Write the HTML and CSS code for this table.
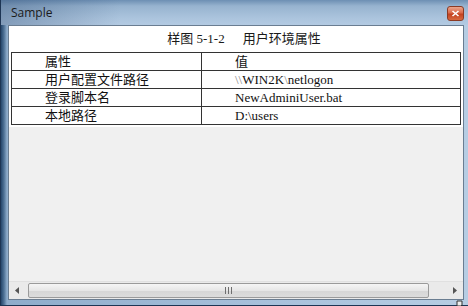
FILE: index.html
```html
<!DOCTYPE html>
<html lang="zh">
<head>
<meta charset="utf-8">
<title>Sample</title>
<link rel="stylesheet" href="styles.css">
</head>
<body>
<div class="window">
  <div class="titlebar">
    <span class="title">Sample</span>
    <span class="close"><svg width="9" height="7" viewBox="0 0 9 7"><path d="M1.5 1 L7.5 6 M7.5 1 L1.5 6" stroke="#fff" stroke-width="1.6"/></svg></span>
  </div>
  <div class="frame">
    <div class="client">
      <div class="sheet">
        <div class="caption">样图 5-1-2<span class="gap"></span>用户环境属性</div>
        <table class="grid">
          <colgroup><col class="c1"><col></colgroup>
          <tr class="head"><td class="k">属性</td><td class="v">值</td></tr>
          <tr><td class="k">用户配置文件路径</td><td class="v"><span class="dim">\\</span>WIN2K<span class="dim">\</span>netlogon</td></tr>
          <tr><td class="k">登录脚本名</td><td class="v">NewAdminiUser.bat</td></tr>
          <tr><td class="k">本地路径</td><td class="v">D:\users</td></tr>
        </table>
      </div>
      <div class="empty"></div>
      <div class="hscroll">
        <span class="arrow"><svg width="5" height="7" viewBox="0 0 5 7"><path d="M4 0 L0 3.5 L4 7 Z" fill="#555"/></svg></span>
        <span class="thumb"><span class="grip"></span></span>
        <span class="arrow"><svg width="5" height="7" viewBox="0 0 5 7"><path d="M1 0 L5 3.5 L1 7 Z" fill="#555"/></svg></span>
      </div>
    </div>
  </div>
  <span class="sizer"><svg width="9" height="9" viewBox="0 0 9 9"><path d="M1 1 h5 v5 h-5 Z M5 5 L8.5 8.5" stroke="#333" fill="#eee" stroke-width="1"/></svg></span>
</div>
</body>
</html>
```

FILE: styles.css
```css
html, body {
  margin: 0;
  padding: 0;
  background: #ffffff;
}
.window {
  position: relative;
  width: 468px;
  height: 306px;
  box-sizing: border-box;
  display: flex;
  flex-direction: column;
  background: linear-gradient(to right, #26476c 0px, #4f7296 3px, #8eaccb 6px, #a9c2dc 60%, #b6cde3 100%);
  border-left: 1px solid #1d3554;
  border-bottom: 1px solid #1d3554;
}
.titlebar {
  height: 25px;
  flex: none;
  display: flex;
  align-items: center;
  justify-content: space-between;
  padding: 0 4px 0 10px;
  background: linear-gradient(to right, rgba(40,70,110,0.35) 0px, rgba(40,70,110,0) 120px),
              linear-gradient(to bottom, #6d8fb3 0px, #97b3cf 6px, #abc4dd 18px, #b3cae2 25px);
}
.title {
  font-family: "Open Sans", "Noto Sans", sans-serif;
  font-size: 12px;
  color: #1b1b1b;
  padding-bottom: 1px;
}
.close {
  width: 17px;
  height: 15px;
  box-sizing: border-box;
  border: 1px solid #8b3a24;
  border-radius: 3px;
  background: linear-gradient(to bottom, #eba58c 0%, #d9694a 45%, #c2411f 55%, #d86a40 100%);
  display: flex;
  align-items: center;
  justify-content: center;
  margin-top: 2px;
}
.frame {
  flex: 1;
  display: flex;
  padding: 0 4px 5px 7px;
  min-height: 0;
}
.client {
  flex: 1;
  display: flex;
  flex-direction: column;
  border: 1px solid #6a7d91;
  background: #f0f0f0;
}
.sheet {
  background: #ffffff;
  padding: 0 2px 2px 2px;
}
.caption {
  height: 26px;
  line-height: 26px;
  text-align: center;
  padding-left: 16px;
  font-family: "Liberation Serif", "Noto Sans CJK SC", serif;
  font-size: 13px;
  color: #1a1a1a;
}
.gap {
  display: inline-block;
  width: 18px;
}
.grid {
  width: 100%;
  table-layout: fixed;
  border-collapse: collapse;
  border: 1px solid #222;
  font-family: "Liberation Serif", "Noto Sans CJK SC", serif;
  font-size: 13px;
  color: #111;
}
.c1 {
  width: 190px;
}
.grid td {
  border: 1px solid #333;
  height: 17px;
  padding: 0;
  line-height: 17px;
  vertical-align: middle;
  white-space: nowrap;
}
.grid td.k {
  padding-left: 33px;
}
.grid td.v {
  padding-left: 33px;
}
.dim {
  color: #888;
}
.empty {
  flex: 1;
}
.hscroll {
  height: 17px;
  display: flex;
  align-items: stretch;
  background: #eaeaea;
  border-top: 1px solid #e0e0e0;
}
.arrow {
  width: 17px;
  display: flex;
  align-items: center;
  justify-content: center;
  flex: none;
}
.thumb {
  flex: 1;
  margin: 1px 17px 1px 2px;
  box-sizing: border-box;
  border: 1px solid #9a9a9a;
  border-radius: 2px;
  background: linear-gradient(to bottom, #f5f5f5 0%, #e6e6e6 50%, #d6d6d6 51%, #dcdcdc 100%);
  display: flex;
  align-items: center;
  justify-content: center;
}
.grip {
  width: 7px;
  height: 7px;
  background: repeating-linear-gradient(to right, #6e6e6e 0 1px, transparent 1px 3px);
}
.sizer {
  position: absolute;
  right: 3px;
  bottom: 1px;
  width: 9px;
  height: 9px;
}
```
